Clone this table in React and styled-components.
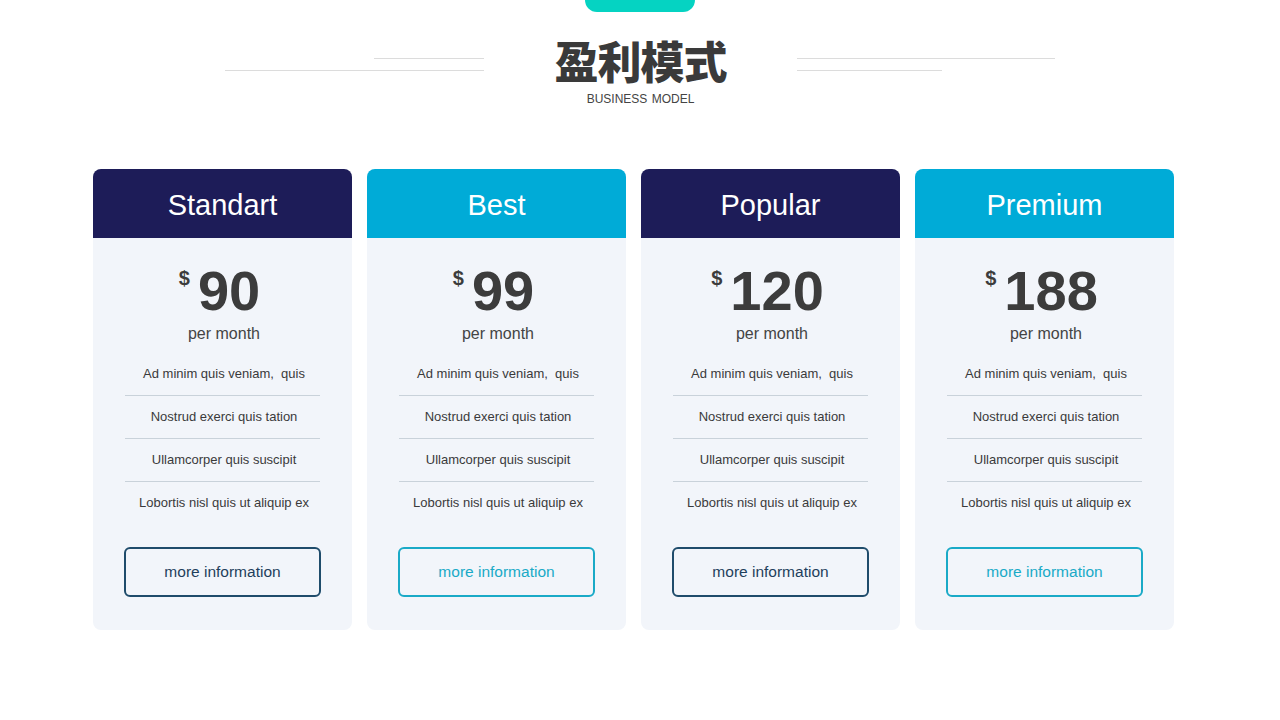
import React from "react";
import styled, { createGlobalStyle } from "styled-components";

const Global = createGlobalStyle`
  html, body { margin: 0; padding: 0; background: #ffffff; }
  body { font-family: "Liberation Sans", Arial, sans-serif; }
  * { box-sizing: border-box; }
`;

const Page = styled.div`
  width: 1280px;
  height: 720px;
  display: flex;
  flex-direction: column;
  align-items: center;
  overflow: hidden;
  background: #fff;
`;

const Tab = styled.div`
  width: 110px;
  height: 12px;
  background: #05d3c2;
  border-radius: 0 0 12px 12px;
`;

const Header = styled.div`
  display: flex;
  margin-top: 23px;
`;

const LineGroup = styled.div`
  width: ${(p) => p.$w}px;
  display: flex;
  flex-direction: column;
  align-items: ${(p) => (p.$side === "left" ? "flex-end" : "flex-start")};
  padding-top: 23px;
  gap: 11px;
`;

const Line = styled.div`
  height: 1px;
  width: ${(p) => p.$w}px;
  background: #dcdcdc;
`;

const TitleBlock = styled.div`
  width: 313px;
  display: flex;
  flex-direction: column;
  align-items: center;
`;

const Title = styled.h1`
  margin: 0;
  font-family: "Noto Sans CJK SC", "Noto Sans", sans-serif;
  font-weight: 900;
  font-size: 44px;
  line-height: 50px;
  color: #3a3a3a;
  letter-spacing: -1px;
`;

const Sub = styled.div`
  margin-top: 7px;
  font-size: 12px;
  line-height: 14px;
  color: #444;
  word-spacing: 1px;
`;

const Cards = styled.div`
  display: flex;
  gap: 15px;
  margin-top: 63px;
  align-self: flex-start;
  margin-left: 93px;
`;

const Card = styled.div`
  width: 259px;
  display: flex;
  flex-direction: column;
  border-radius: 8px;
  overflow: hidden;
  background: #f2f5fa;
`;

const CardHead = styled.div`
  height: 69px;
  padding-top: 3px;
  background: ${(p) => (p.$accent ? "#00abd7" : "#1d1c58")};
  color: #fff;
  font-size: 29px;
  display: flex;
  align-items: center;
  justify-content: center;
`;

const Body = styled.div`
  display: flex;
  flex-direction: column;
  align-items: center;
  padding: 20px 0 33px 3px;
`;

const Price = styled.div`
  display: flex;
  align-items: flex-start;
  gap: 8px;
  color: #3c3c3c;
  font-weight: 700;
  margin-left: -9px;
`;

const Dollar = styled.span`
  font-size: 20px;
  line-height: 20px;
  margin-top: 10px;
`;

const Amount = styled.span`
  font-size: 56px;
  line-height: 66px;
`;

const Per = styled.div`
  font-size: 16px;
  line-height: 20px;
  color: #444;
`;

const Features = styled.ul`
  list-style: none;
  margin: 9px 0 0 -3px;
  padding: 0;
  width: 195px;
`;

const Feature = styled.li`
  height: 43px;
  display: flex;
  align-items: center;
  justify-content: center;
  font-size: 13px;
  color: #3a3a3a;
  white-space: pre;
  border-bottom: 1px solid #c9d2da;
  padding: 0 0 1px 3px;
  &:last-child { border-bottom: none; height: 42px; }
`;

const Button = styled.button`
  margin: 23px 0 0 -3px;
  width: 197px;
  height: 50px;
  border-radius: 6px;
  background: transparent;
  border: 2px solid ${(p) => (p.$accent ? "#1aaac7" : "#1f4c6b")};
  color: ${(p) => (p.$accent ? "#1aaac7" : "#1f3f5c")};
  font-family: "Liberation Sans", Arial, sans-serif;
  font-size: 15.5px;
  padding: 0;
  cursor: pointer;
`;

const plans = [
  { name: "Standart", price: "90", accent: false },
  { name: "Best", price: "99", accent: true },
  { name: "Popular", price: "120", accent: false },
  { name: "Premium", price: "188", accent: true },
];

const features = [
  "Ad minim quis veniam,  quis",
  "Nostrud exerci quis tation",
  "Ullamcorper quis suscipit",
  "Lobortis nisl quis ut aliquip ex",
];

export default function App() {
  return (
    <>
      <Global />
      <Page>
        <Tab />
        <Header>
          <LineGroup $w={259} $side="left">
            <Line $w={110} />
            <Line $w={259} />
          </LineGroup>
          <TitleBlock>
            <Title>盈利模式</Title>
            <Sub>BUSINESS MODEL</Sub>
          </TitleBlock>
          <LineGroup $w={258} $side="right">
            <Line $w={258} />
            <Line $w={145} />
          </LineGroup>
        </Header>
        <Cards>
          {plans.map((p) => (
            <Card key={p.name}>
              <CardHead $accent={p.accent}>{p.name}</CardHead>
              <Body>
                <Price>
                  <Dollar>$</Dollar>
                  <Amount>{p.price}</Amount>
                </Price>
                <Per>per month</Per>
                <Features>
                  {features.map((f) => (
                    <Feature key={f}>{f}</Feature>
                  ))}
                </Features>
                <Button $accent={p.accent}>more information</Button>
              </Body>
            </Card>
          ))}
        </Cards>
      </Page>
    </>
  );
}
